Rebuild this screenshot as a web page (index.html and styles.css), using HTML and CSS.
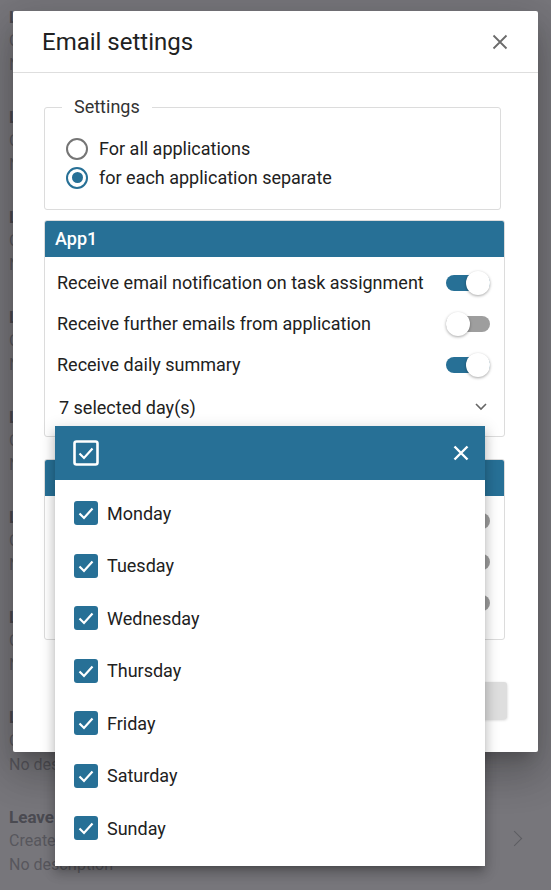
FILE: index.html
```html
<!DOCTYPE html>
<html lang="en">
<head>
<meta charset="utf-8">
<title>Email settings</title>
<link rel="stylesheet" href="styles.css">
</head>
<body>
<div class="page">
  <ul class="bg-list">
    <li class="bg-item"><div class="bg-title">Leave request</div><div class="bg-sub">Created by admin</div><div class="bg-sub">No description</div><span class="bg-chev"></span></li>
    <li class="bg-item"><div class="bg-title">Leave request</div><div class="bg-sub">Created by admin</div><div class="bg-sub">No description</div><span class="bg-chev"></span></li>
    <li class="bg-item"><div class="bg-title">Leave request</div><div class="bg-sub">Created by admin</div><div class="bg-sub">No description</div><span class="bg-chev"></span></li>
    <li class="bg-item"><div class="bg-title">Leave request</div><div class="bg-sub">Created by admin</div><div class="bg-sub">No description</div><span class="bg-chev"></span></li>
    <li class="bg-item"><div class="bg-title">Leave request</div><div class="bg-sub">Created by admin</div><div class="bg-sub">No description</div><span class="bg-chev"></span></li>
    <li class="bg-item"><div class="bg-title">Leave request</div><div class="bg-sub">Created by admin</div><div class="bg-sub">No description</div><span class="bg-chev"></span></li>
    <li class="bg-item"><div class="bg-title">Leave request</div><div class="bg-sub">Created by admin</div><div class="bg-sub">No description</div><span class="bg-chev"></span></li>
    <li class="bg-item"><div class="bg-title">Leave request</div><div class="bg-sub">Created by admin</div><div class="bg-sub">No description</div><span class="bg-chev"></span></li>
    <li class="bg-item"><div class="bg-title">Leave request</div><div class="bg-sub">Created by admin</div><div class="bg-sub">No description</div><span class="bg-chev"></span></li>
  </ul>

  <div class="dialog">
    <div class="dialog-head">
      <h1 class="dialog-title">Email settings</h1>
      <svg class="dialog-close" viewBox="0 0 16 16" width="16" height="16"><path d="M1.5 1.5 L14.5 14.5 M14.5 1.5 L1.5 14.5" stroke="#6b6b6b" stroke-width="1.8" fill="none"/></svg>
    </div>
    <div class="dialog-body">
      <fieldset class="settings">
        <legend>Settings</legend>
        <label class="radio-row"><span class="radio"></span>For all applications</label>
        <label class="radio-row"><span class="radio radio-on"></span>for each application separate</label>
      </fieldset>

      <section class="app-card">
        <div class="app-head">App1</div>
        <div class="app-body">
          <div class="opt-row"><span>Receive email notification on task assignment</span><span class="toggle toggle-on"></span></div>
          <div class="opt-row"><span>Receive further emails from application</span><span class="toggle"></span></div>
          <div class="opt-row"><span>Receive daily summary</span><span class="toggle toggle-on"></span></div>
          <div class="select-row"><span>7 selected day(s)</span>
            <svg class="select-chev" viewBox="0 0 12 8" width="12" height="8"><path d="M1 1 L6 6 L11 1" stroke="#666" stroke-width="1.6" fill="none"/></svg>
          </div>
        </div>
      </section>

      <section class="app-card app-card-2">
        <div class="app-head">App2</div>
        <div class="app-body app-body-2">
          <div class="opt-row"><span>Receive email notification on task assignment</span><span class="toggle"></span></div>
          <div class="opt-row"><span>Receive further emails from application</span><span class="toggle"></span></div>
          <div class="opt-row"><span>Receive daily summary</span><span class="toggle"></span></div>
        </div>
      </section>

      <div class="dialog-foot">
        <button class="btn">Close</button>
      </div>
    </div>
  </div>

  <div class="dropdown">
    <div class="dd-head">
      <svg class="dd-all" viewBox="0 0 26 26" width="26" height="26"><rect x="1.5" y="1.5" width="23" height="23" rx="2" stroke="#fff" stroke-width="2.6" fill="none"/><path d="M6.5 13.5 L11 18 L19.5 8.5" stroke="#fff" stroke-width="2.2" fill="none"/></svg>
      <svg class="dd-close" viewBox="0 0 16 16" width="16" height="16"><path d="M1.5 1.5 L14.5 14.5 M14.5 1.5 L1.5 14.5" stroke="#fff" stroke-width="2.4" fill="none"/></svg>
    </div>
    <ul class="dd-list">
      <li class="dd-item"><span class="cb"><svg viewBox="0 0 24 24" width="24" height="24"><path d="M5.5 12.5 L10 17 L18.5 7.5" stroke="#fff" stroke-width="2.2" fill="none"/></svg></span>Monday</li>
      <li class="dd-item"><span class="cb"><svg viewBox="0 0 24 24" width="24" height="24"><path d="M5.5 12.5 L10 17 L18.5 7.5" stroke="#fff" stroke-width="2.2" fill="none"/></svg></span>Tuesday</li>
      <li class="dd-item"><span class="cb"><svg viewBox="0 0 24 24" width="24" height="24"><path d="M5.5 12.5 L10 17 L18.5 7.5" stroke="#fff" stroke-width="2.2" fill="none"/></svg></span>Wednesday</li>
      <li class="dd-item"><span class="cb"><svg viewBox="0 0 24 24" width="24" height="24"><path d="M5.5 12.5 L10 17 L18.5 7.5" stroke="#fff" stroke-width="2.2" fill="none"/></svg></span>Thursday</li>
      <li class="dd-item"><span class="cb"><svg viewBox="0 0 24 24" width="24" height="24"><path d="M5.5 12.5 L10 17 L18.5 7.5" stroke="#fff" stroke-width="2.2" fill="none"/></svg></span>Friday</li>
      <li class="dd-item"><span class="cb"><svg viewBox="0 0 24 24" width="24" height="24"><path d="M5.5 12.5 L10 17 L18.5 7.5" stroke="#fff" stroke-width="2.2" fill="none"/></svg></span>Saturday</li>
      <li class="dd-item"><span class="cb"><svg viewBox="0 0 24 24" width="24" height="24"><path d="M5.5 12.5 L10 17 L18.5 7.5" stroke="#fff" stroke-width="2.2" fill="none"/></svg></span>Sunday</li>
    </ul>
  </div>
</div>
</body>
</html>
```

FILE: styles.css
```css
* { box-sizing: border-box; }
html, body {
  margin: 0;
  padding: 0;
  width: 551px;
  height: 890px;
  overflow: hidden;
  background: #77767b;
  font-family: Roboto, "Noto Sans", "Liberation Sans", sans-serif;
}
.page {
  position: relative;
  width: 551px;
  height: 890px;
  overflow: hidden;
}

/* background list (under overlay) */
.bg-list {
  list-style: none;
  margin: 0;
  padding: 0 0 0 9px;
}
.bg-item {
  position: relative;
  height: 100px;
  padding-top: 5px;
}
.bg-title {
  font-size: 17px;
  font-weight: 700;
  line-height: 24px;
  color: #4a4a51;
}
.bg-sub {
  font-size: 16px;
  line-height: 24px;
  color: #57575d;
}
.bg-chev {
  position: absolute;
  right: 31px;
  top: 33px;
  width: 11px;
  height: 11px;
  border-right: 1.5px solid #5c5c62;
  border-top: 1.5px solid #5c5c62;
  transform: rotate(45deg);
}

/* dialog */
.dialog {
  position: absolute;
  left: 13px;
  top: 11px;
  width: 525px;
  height: 741px;
  background: #fff;
  border-radius: 2px;
  box-shadow: 0 11px 15px -7px rgba(0,0,0,0.2), 0 24px 38px 3px rgba(0,0,0,0.14), 0 9px 46px 8px rgba(0,0,0,0.12);
  display: flex;
  flex-direction: column;
}
.dialog-head {
  height: 62px;
  border-bottom: 1px solid #dedede;
  display: flex;
  align-items: center;
  justify-content: space-between;
  padding: 0 30px 0 29px;
}
.dialog-title {
  margin: 0;
  font-size: 24px;
  font-weight: 400;
  color: #212121;
}
.dialog-close { display: block; }

.dialog-body {
  padding: 24px 33px 0 31px;
  display: flex;
  flex-direction: column;
}

.settings {
  margin: 0 4px 0 0;
  border: 1px solid #dcdcdc;
  border-radius: 3px;
  padding: 17px 16px 17px 21px;
}
.settings legend {
  font-size: 18px;
  color: #333;
  padding: 0 12px;
  margin-left: -4px;
  line-height: 20px;
}
.radio-row {
  display: flex;
  align-items: center;
  height: 29px;
  font-size: 18px;
  color: #212121;
}
.radio {
  width: 22px;
  height: 22px;
  border-radius: 50%;
  border: 2.5px solid #757575;
  margin-right: 11px;
  flex: none;
  display: flex;
  align-items: center;
  justify-content: center;
}
.radio-on { border-color: #277096; }
.radio-on::after {
  content: "";
  width: 11px;
  height: 11px;
  border-radius: 50%;
  background: #277096;
}

.app-card {
  margin-top: 10px;
  border: 1px solid #dcdcdc;
  border-radius: 3px;
  overflow: hidden;
}
.app-card-2 { margin-top: 22px; }
.app-head {
  height: 36px;
  background: #277096;
  color: #fff;
  font-size: 18px;
  font-weight: 500;
  line-height: 36px;
  padding-left: 10px;
}
.app-body {
  padding: 5px 14px 7px 12px;
}
.app-body-2 { padding-top: 4px; padding-bottom: 16px; }
.opt-row {
  height: 41px;
  display: flex;
  align-items: center;
  justify-content: space-between;
  font-size: 18px;
  color: #212121;
}
.select-row {
  height: 44px;
  display: flex;
  align-items: center;
  justify-content: space-between;
  font-size: 18px;
  color: #212121;
  padding: 0 3px 0 2px;
}
.select-chev { display: block; }

.toggle {
  position: relative;
  width: 44px;
  height: 16px;
  border-radius: 8px;
  background: #9e9e9e;
  flex: none;
}
.toggle::after {
  content: "";
  position: absolute;
  top: -4px;
  left: 0;
  width: 24px;
  height: 24px;
  border-radius: 50%;
  background: #fff;
  box-shadow: 0 1px 3px rgba(0,0,0,0.35);
}
.toggle-on { background: #277096; }
.toggle-on::after { left: 20px; }

.dialog-foot {
  display: flex;
  justify-content: flex-end;
  margin-top: 42px;
  margin-right: -2px;
}
.btn {
  width: 92px;
  height: 37px;
  border: none;
  border-radius: 3px;
  background: #dedede;
  box-shadow: 0 1px 3px rgba(0,0,0,0.2);
  font-family: inherit;
  font-size: 15px;
  color: #212121;
}

/* dropdown */
.dropdown {
  position: absolute;
  left: 55px;
  top: 426px;
  width: 430px;
  height: 440px;
  background: #fff;
  box-shadow: 0 5px 5px -3px rgba(0,0,0,0.2), 0 8px 10px 1px rgba(0,0,0,0.14), 0 3px 14px 2px rgba(0,0,0,0.12);
}
.dd-head {
  height: 54px;
  background: #277096;
  display: flex;
  align-items: center;
  justify-content: space-between;
  padding: 0 16px 0 18px;
}
.dd-all, .dd-close { display: block; }
.dd-list {
  list-style: none;
  margin: 0;
  padding: 7px 0 0 19px;
}
.dd-item {
  height: 52.5px;
  display: flex;
  align-items: center;
  font-size: 18px;
  color: #212121;
}
.cb {
  width: 24px;
  height: 24px;
  border-radius: 3px;
  background: #277096;
  margin-right: 9px;
  flex: none;
}
.cb svg { display: block; }
```
